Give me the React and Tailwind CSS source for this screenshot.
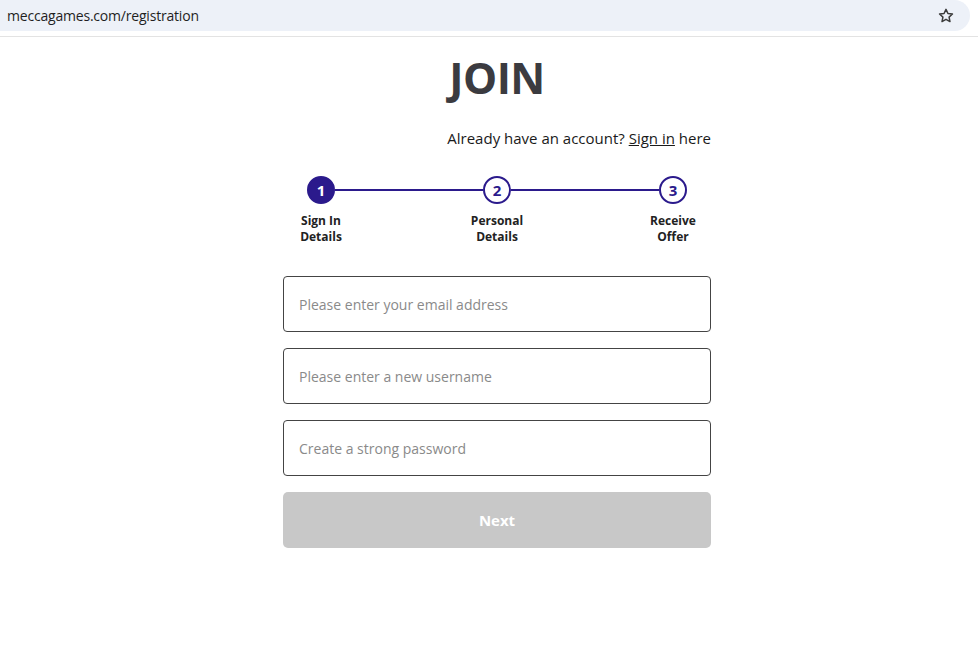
import React from "react";

function Star() {
  return (
    <svg width="18" height="18" viewBox="0 0 24 24" fill="none" stroke="#3c3c3c" strokeWidth="2" strokeLinejoin="round">
      <path d="M12 3.2l2.6 5.5 6 .7-4.5 4.1 1.2 5.9L12 16.5l-5.3 2.9 1.2-5.9L3.4 9.4l6-.7z" />
    </svg>
  );
}

function Circle({ n, active }) {
  return (
    <div
      className={
        "w-[28px] h-[28px] rounded-full flex items-center justify-center text-[15px] font-bold shrink-0 border-2 border-[#2b1a8c] " +
        (active ? "bg-[#2b1a8c] text-white" : "bg-white text-[#2b1a8c]")
      }
    >
      {n}
    </div>
  );
}

export default function App() {
  return (
    <div className="w-[978px] h-[660px] bg-white overflow-hidden" style={{ fontFamily: '"Open Sans", "Noto Sans", sans-serif' }}>
      <div className="h-[37px] border-b border-[#e3e3e3]">
        <div className="h-[31px] w-[970px] bg-[#edf1f8] rounded-r-[16px] flex items-center justify-between pl-[7px] pr-[15px]">
          <span className="text-[14px] text-[#1f1f1f] tracking-[-0.2px]">meccagames.com/registration</span>
          <Star />
        </div>
      </div>

      <div className="w-[428px] ml-[283px] flex flex-col">
        <h1 className="text-center text-[43px] font-bold text-[#3b3b40] leading-none mt-[19px] h-[48px] tracking-[-0.5px]">JOIN</h1>
        <div className="text-right text-[15px] text-[#1a1a1a] mt-[23px] leading-[22px]">
          Already have an account? <span className="underline">Sign in</span> here
        </div>

        <div className="mt-[27px] flex items-center px-[24px]">
          <Circle n="1" active />
          <div className="flex-1 h-[2px] bg-[#2b1a8c]" />
          <Circle n="2" />
          <div className="flex-1 h-[2px] bg-[#2b1a8c]" />
          <Circle n="3" />
        </div>
        <div className="mt-[9px] flex justify-between">
          {[["Sign In", "Details"], ["Personal", "Details"], ["Receive", "Offer"]].map(([a, b]) => (
            <div key={a} className="w-[76px] text-center text-[12px] font-bold text-[#222] leading-[16px]">
              {a}
              <br />
              {b}
            </div>
          ))}
        </div>

        <div className="mt-[31px] flex flex-col gap-[16px]">
          {["Please enter your email address", "Please enter a new username", "Create a strong password"].map((p) => (
            <div key={p} className="h-[56px] border border-[#444] rounded-[4px] flex items-center px-[15px]">
              <span className="text-[14px] text-[#8a8a8a]">{p}</span>
            </div>
          ))}
          <div className="h-[56px] bg-[#c8c8c8] rounded-[5px] flex items-center justify-center">
            <span className="text-[15px] font-bold text-white">Next</span>
          </div>
        </div>
      </div>
    </div>
  );
}
